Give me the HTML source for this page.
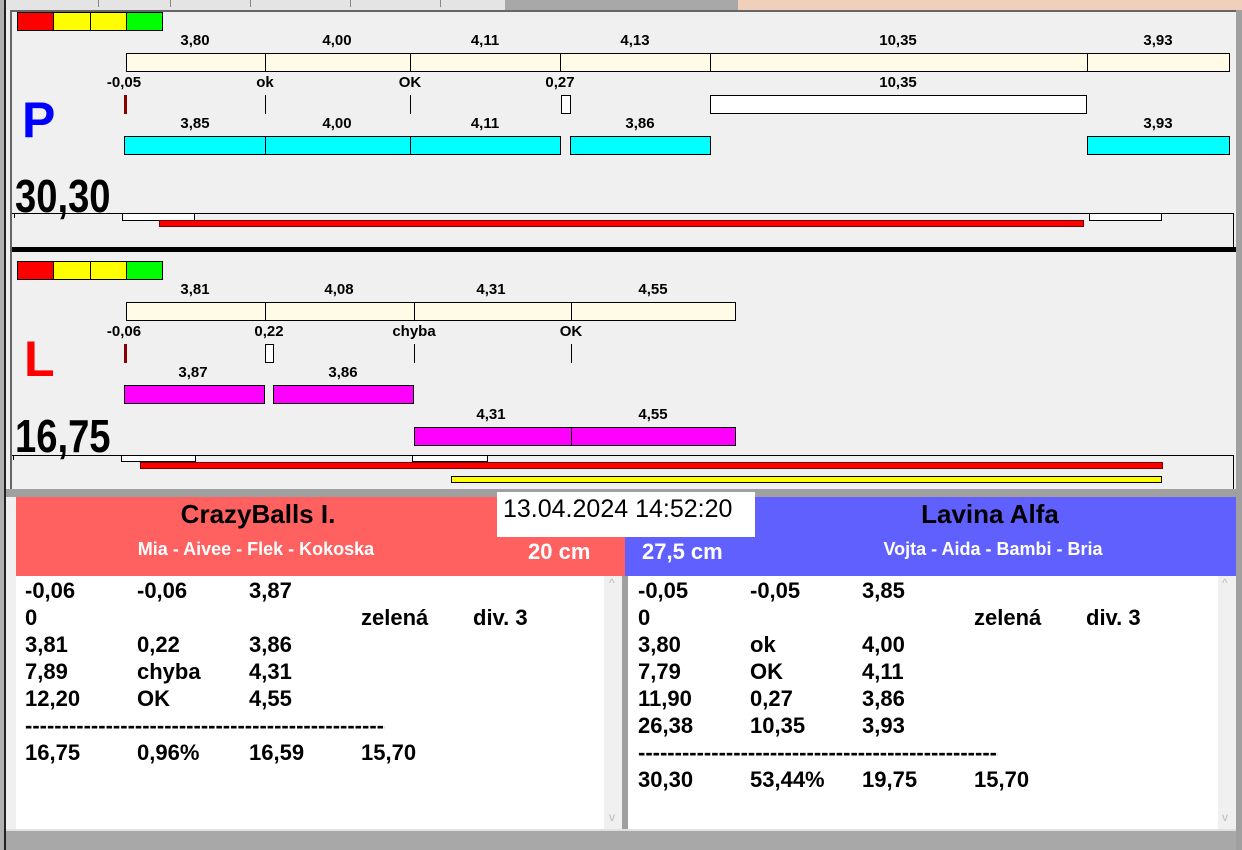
<!DOCTYPE html>
<html><head><meta charset="utf-8">
<style>
*{margin:0;padding:0;box-sizing:border-box}
body{width:1242px;height:850px;overflow:hidden;background:#f0f0f0;position:relative;font-family:"Liberation Sans",Arial,sans-serif}
div{position:absolute}
.b{border:1px solid #000}
.t{font-weight:bold;font-size:15px;transform:translateX(-50%);white-space:nowrap;line-height:17px}
.cr{background:#fffbe6}
.cy{background:#00ffff}
.mg{background:#ff00ff}
.vl{width:1px;background:#000}
.row{font-weight:bold;font-size:22px;line-height:27px;white-space:nowrap}
.row span{position:absolute}
.big{font-size:46px;font-weight:bold;line-height:50px;transform:scaleX(0.83);transform-origin:0 0;white-space:nowrap}
</style></head><body>
<div style="left:0;top:0;width:1242px;height:10px;background:#e4e4e4"></div>
<div style="left:98px;top:0;width:1px;height:7px;background:#888"></div>
<div style="left:170px;top:0;width:1px;height:7px;background:#888"></div>
<div style="left:250px;top:0;width:1px;height:7px;background:#888"></div>
<div style="left:350px;top:0;width:1px;height:7px;background:#888"></div>
<div style="left:440px;top:0;width:1px;height:7px;background:#888"></div>
<div style="left:505px;top:0;width:233px;height:10px;background:#a8a8a8"></div>
<div style="left:738px;top:0;width:504px;height:12px;background:#f0d0b8"></div>
<div style="left:0;top:0;width:4px;height:850px;background:#b0b0b0"></div>
<div style="left:4px;top:0;width:2px;height:850px;background:#222"></div>
<div style="left:10px;top:10px;width:2px;height:480px;background:#666"></div>
<div style="left:10px;top:10px;width:1226px;height:2px;background:#666"></div>
<div style="left:1236px;top:10px;width:6px;height:840px;background:#a0a0a0"></div>

<div class="b" style="left:17px;top:12px;width:37px;height:19px;background:#f00"></div>
<div class="b" style="left:53px;top:12px;width:38px;height:19px;background:#ff0"></div>
<div class="b" style="left:90px;top:12px;width:37px;height:19px;background:#ff0"></div>
<div class="b" style="left:126px;top:12px;width:37px;height:19px;background:#0f0"></div>

<div class="t" style="left:195px;top:32px">3,80</div>
<div class="t" style="left:337px;top:32px">4,00</div>
<div class="t" style="left:485px;top:32px">4,11</div>
<div class="t" style="left:635px;top:32px">4,13</div>
<div class="t" style="left:898px;top:32px">10,35</div>
<div class="t" style="left:1158px;top:32px">3,93</div>
<div class="b cr" style="left:126px;top:53px;width:140px;height:19px"></div>
<div class="b cr" style="left:265px;top:53px;width:146px;height:19px"></div>
<div class="b cr" style="left:410px;top:53px;width:151px;height:19px"></div>
<div class="b cr" style="left:560px;top:53px;width:151px;height:19px"></div>
<div class="b cr" style="left:710px;top:53px;width:378px;height:19px"></div>
<div class="b cr" style="left:1087px;top:53px;width:143px;height:19px"></div>

<div class="t" style="left:124px;top:74px">-0,05</div>
<div class="t" style="left:265px;top:74px">ok</div>
<div class="t" style="left:410px;top:74px">OK</div>
<div class="t" style="left:560px;top:74px">0,27</div>
<div class="t" style="left:898px;top:74px">10,35</div>
<div style="left:124px;top:95px;width:3px;height:19px;background:#800"></div>
<div class="vl" style="left:265px;top:95px;height:19px"></div>
<div class="vl" style="left:410px;top:95px;height:19px"></div>
<div class="b" style="left:561px;top:95px;width:10px;height:19px;background:#fff"></div>
<div class="b" style="left:710px;top:95px;width:377px;height:19px;background:#fff"></div>

<div class="t" style="left:195px;top:115px">3,85</div>
<div class="t" style="left:337px;top:115px">4,00</div>
<div class="t" style="left:485px;top:115px">4,11</div>
<div class="t" style="left:640px;top:115px">3,86</div>
<div class="t" style="left:1158px;top:115px">3,93</div>
<div class="b cy" style="left:124px;top:136px;width:142px;height:19px"></div>
<div class="b cy" style="left:265px;top:136px;width:146px;height:19px"></div>
<div class="b cy" style="left:410px;top:136px;width:151px;height:19px"></div>
<div class="b cy" style="left:570px;top:136px;width:141px;height:19px"></div>
<div class="b cy" style="left:1087px;top:136px;width:143px;height:19px"></div>

<div style="left:22px;top:92px;font-size:50px;font-weight:bold;color:#0000ff;line-height:56px">P</div>
<div class="big" style="left:15px;top:171px">30,30</div>

<div style="left:12px;top:213px;width:1222px;height:1px;background:#000"></div>
<div class="vl" style="left:14px;top:213px;height:5px"></div>
<div class="vl" style="left:1233px;top:213px;height:34px"></div>
<div class="b" style="left:122px;top:213px;width:73px;height:8px;background:#fff"></div>
<div class="b" style="left:1089px;top:213px;width:73px;height:8px;background:#fff"></div>
<div style="left:159px;top:220px;width:925px;height:7px;background:#f00;border:1px solid #700"></div>
<div style="left:12px;top:247px;width:1224px;height:5px;background:#000"></div>

<div class="b" style="left:17px;top:261px;width:37px;height:19px;background:#f00"></div>
<div class="b" style="left:53px;top:261px;width:38px;height:19px;background:#ff0"></div>
<div class="b" style="left:90px;top:261px;width:37px;height:19px;background:#ff0"></div>
<div class="b" style="left:126px;top:261px;width:37px;height:19px;background:#0f0"></div>

<div class="t" style="left:195px;top:281px">3,81</div>
<div class="t" style="left:339px;top:281px">4,08</div>
<div class="t" style="left:491px;top:281px">4,31</div>
<div class="t" style="left:653px;top:281px">4,55</div>
<div class="b cr" style="left:126px;top:302px;width:140px;height:19px"></div>
<div class="b cr" style="left:265px;top:302px;width:150px;height:19px"></div>
<div class="b cr" style="left:414px;top:302px;width:158px;height:19px"></div>
<div class="b cr" style="left:571px;top:302px;width:165px;height:19px"></div>

<div class="t" style="left:124px;top:323px">-0,06</div>
<div class="t" style="left:269px;top:323px">0,22</div>
<div class="t" style="left:414px;top:323px">chyba</div>
<div class="t" style="left:571px;top:323px">OK</div>
<div style="left:124px;top:344px;width:3px;height:19px;background:#800"></div>
<div class="b" style="left:265px;top:344px;width:9px;height:19px;background:#fff"></div>
<div class="vl" style="left:414px;top:344px;height:19px"></div>
<div class="vl" style="left:571px;top:344px;height:19px"></div>

<div class="t" style="left:193px;top:364px">3,87</div>
<div class="t" style="left:343px;top:364px">3,86</div>
<div class="b mg" style="left:124px;top:385px;width:141px;height:19px"></div>
<div class="b mg" style="left:273px;top:385px;width:141px;height:19px"></div>
<div class="t" style="left:491px;top:406px">4,31</div>
<div class="t" style="left:653px;top:406px">4,55</div>
<div class="b mg" style="left:414px;top:427px;width:158px;height:19px"></div>
<div class="b mg" style="left:571px;top:427px;width:165px;height:19px"></div>

<div style="left:24px;top:331px;font-size:50px;font-weight:bold;color:#ff0000;line-height:56px">L</div>
<div class="big" style="left:15px;top:411px">16,75</div>

<div style="left:12px;top:455px;width:1222px;height:1px;background:#000"></div>
<div class="vl" style="left:13px;top:455px;height:5px"></div>
<div class="vl" style="left:1233px;top:455px;height:35px"></div>
<div class="b" style="left:121px;top:455px;width:75px;height:7px;background:#fff"></div>
<div class="b" style="left:412px;top:455px;width:76px;height:7px;background:#fff"></div>
<div style="left:140px;top:462px;width:1023px;height:7px;background:#f00;border:1px solid #700"></div>
<div style="left:451px;top:476px;width:711px;height:7px;background:#ff0;border:1px solid #000"></div>

<div style="left:6px;top:489px;width:1230px;height:8px;background:#a0a0a0"></div>
<div style="left:6px;top:497px;width:10px;height:335px;background:#f0f0f0"></div>
<div style="left:16px;top:497px;width:609px;height:79px;background:#ff6060"></div>
<div style="left:625px;top:497px;width:611px;height:79px;background:#6060ff"></div>
<div style="left:497px;top:492px;width:258px;height:45px;background:#fff"></div>
<div style="left:503px;top:494px;font-size:25px;line-height:30px;white-space:nowrap">13.04.2024 14:52:20</div>
<div style="left:258px;top:499px;transform:translateX(-50%);font-size:26px;font-weight:bold;line-height:30px;white-space:nowrap">CrazyBalls I.</div>
<div style="left:256px;top:538px;transform:translateX(-50%);font-size:18px;font-weight:bold;color:#fff;line-height:22px;white-space:nowrap">Mia - Aivee - Flek - Kokoska</div>
<div style="left:528px;top:539px;font-size:22px;font-weight:bold;color:#fff;line-height:26px">20 cm</div>
<div style="left:642px;top:539px;font-size:22px;font-weight:bold;color:#fff;line-height:26px">27,5 cm</div>
<div style="left:990px;top:499px;transform:translateX(-50%);font-size:26px;font-weight:bold;line-height:30px;white-space:nowrap">Lavina Alfa</div>
<div style="left:993px;top:538px;transform:translateX(-50%);font-size:18px;font-weight:bold;color:#fff;line-height:22px;white-space:nowrap">Vojta - Aida - Bambi - Bria</div>

<div style="left:16px;top:576px;width:606px;height:253px;background:#fff"></div>
<div style="left:604px;top:576px;width:18px;height:253px;background:#f0f0f0"></div>
<div style="left:609px;top:576px;font-size:12px;color:#bbb">^</div>
<div style="left:609px;top:810px;font-size:12px;color:#bbb">v</div>
<div style="left:622px;top:576px;width:6px;height:254px;background:#a0a0a0"></div>
<div style="left:628px;top:576px;width:608px;height:253px;background:#fff"></div>
<div style="left:1218px;top:576px;width:18px;height:253px;background:#f0f0f0"></div>
<div style="left:1222px;top:576px;font-size:12px;color:#bbb">^</div>
<div style="left:1222px;top:810px;font-size:12px;color:#bbb">v</div>
<div style="left:6px;top:829px;width:1230px;height:21px;background:#a8a8a8;border-top:2px solid #e0e0e0"></div>

<div class="row" style="left:25px;top:577px;width:590px;height:250px">
<span style="left:0;top:0">-0,06</span><span style="left:112px;top:0">-0,06</span><span style="left:224px;top:0">3,87</span>
<span style="left:0;top:27px">0</span><span style="left:336px;top:27px">zelená</span><span style="left:448px;top:27px">div. 3</span>
<span style="left:0;top:54px">3,81</span><span style="left:112px;top:54px">0,22</span><span style="left:224px;top:54px">3,86</span>
<span style="left:0;top:81px">7,89</span><span style="left:112px;top:81px">chyba</span><span style="left:224px;top:81px">4,31</span>
<span style="left:0;top:108px">12,20</span><span style="left:112px;top:108px">OK</span><span style="left:224px;top:108px">4,55</span>
<span style="left:0;top:135px;width:360px;overflow:hidden">----------------------------------------------------------</span>
<span style="left:0;top:162px">16,75</span><span style="left:112px;top:162px">0,96%</span><span style="left:224px;top:162px">16,59</span><span style="left:336px;top:162px">15,70</span>
</div>
<div class="row" style="left:638px;top:577px;width:580px;height:250px">
<span style="left:0;top:0">-0,05</span><span style="left:112px;top:0">-0,05</span><span style="left:224px;top:0">3,85</span>
<span style="left:0;top:27px">0</span><span style="left:336px;top:27px">zelená</span><span style="left:448px;top:27px">div. 3</span>
<span style="left:0;top:54px">3,80</span><span style="left:112px;top:54px">ok</span><span style="left:224px;top:54px">4,00</span>
<span style="left:0;top:81px">7,79</span><span style="left:112px;top:81px">OK</span><span style="left:224px;top:81px">4,11</span>
<span style="left:0;top:108px">11,90</span><span style="left:112px;top:108px">0,27</span><span style="left:224px;top:108px">3,86</span>
<span style="left:0;top:135px">26,38</span><span style="left:112px;top:135px">10,35</span><span style="left:224px;top:135px">3,93</span>
<span style="left:0;top:162px;width:360px;overflow:hidden">----------------------------------------------------------</span>
<span style="left:0;top:189px">30,30</span><span style="left:112px;top:189px">53,44%</span><span style="left:224px;top:189px">19,75</span><span style="left:336px;top:189px">15,70</span>
</div>
</body></html>
